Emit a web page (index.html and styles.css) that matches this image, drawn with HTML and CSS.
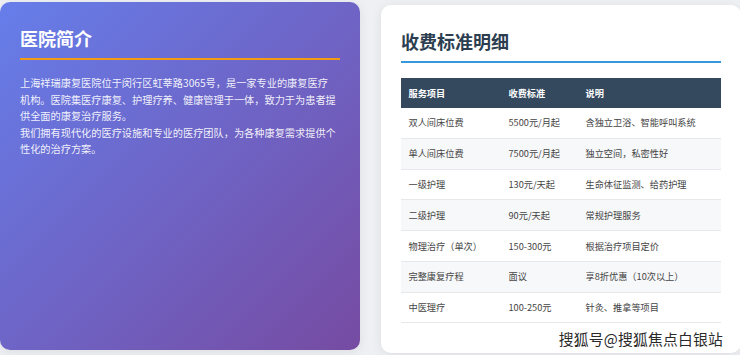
FILE: index.html
```html
<!DOCTYPE html>
<html lang="zh-CN">
<head>
    <meta charset="UTF-8">
    <meta name="viewport" content="width=device-width, initial-scale=1.0">
    <title>医院简介与收费标准</title>
    <link rel="stylesheet" href="styles.css">
</head>
<body>

    <div class="page">

        <div class="card card-intro">
            <h2 class="card-title">医院简介</h2>
            <p class="intro-text">上海祥瑞康复医院位于闵行区虹莘路3065号，是一家专业的康复医疗机构。医院集医疗康复、护理疗养、健康管理于一体，致力于为患者提供全面的康复治疗服务。<br>我们拥有现代化的医疗设施和专业的医疗团队，为各种康复需求提供个性化的治疗方案。</p>
        </div>

        <div class="card card-price">
            <h2 class="card-title">收费标准明细</h2>
            <table class="price-table">
                <colgroup>
                    <col class="col-name">
                    <col class="col-price">
                    <col>
                </colgroup>
                <thead>
                    <tr><th>服务项目</th><th>收费标准</th><th>说明</th></tr>
                </thead>
                <tbody>
                    <tr><td>双人间床位费</td><td>5500元/月起</td><td>含独立卫浴、智能呼叫系统</td></tr>
                    <tr><td>单人间床位费</td><td>7500元/月起</td><td>独立空间，私密性好</td></tr>
                    <tr><td>一级护理</td><td>130元/天起</td><td>生命体征监测、给药护理</td></tr>
                    <tr><td>二级护理</td><td>90元/天起</td><td>常规护理服务</td></tr>
                    <tr><td>物理治疗（单次）</td><td>150-300元</td><td>根据治疗项目定价</td></tr>
                    <tr><td>完整康复疗程</td><td>面议</td><td>享8折优惠（10次以上）</td></tr>
                    <tr><td>中医理疗</td><td>100-250元</td><td>针灸、推拿等项目</td></tr>
                </tbody>
            </table>
            <div class="watermark">搜狐号@搜狐焦点白银站</div>
        </div>

    </div>

</body>
</html>
```

FILE: styles.css
```css
body {
    margin: 0;
    height: 355px;
    overflow: hidden;
    background-color: #eef0f3;
    font-family: "Noto Sans CJK SC", "Noto Sans", sans-serif;
    color: #333;
}

.page {
    display: grid;
    grid-template-columns: 360px 360px;
    grid-template-rows: 348px;
    gap: 21px;
    padding-top: 5px;
}

.card {
    position: relative;
    box-sizing: border-box;
    padding: 25px 20px 20px;
    border-radius: 10px;
    background-color: #fff;
    box-shadow: 0 2px 12px rgba(0, 0, 0, 0.08);
}

/* левая карточка в состоянии hover - приподнята */
.card-intro {
    transform: translateY(-3px);
    background: linear-gradient(135deg, #667eea 0%, #764ba2 100%);
    color: #fff;
}

.card-title {
    margin: 0 0 15px;
    padding-bottom: 9px;
    font-size: 18px;
    line-height: 22px;
    font-weight: 700;
    border-bottom: 2px solid #3498db;
    color: #2c3e50;
}

.card-intro .card-title {
    color: #fff;
    border-bottom-color: #f39c12;
}

.intro-text {
    margin: 0;
    padding-right: 2px;
    font-size: 10.2px;
    line-height: 16.6px;
    color: rgba(255, 255, 255, 0.92);
}

.price-table {
    width: 100%;
    border-collapse: collapse;
    table-layout: fixed;
    font-size: 9.2px;
    line-height: 13px;
}

.col-name {
    width: 100px;
}

.col-price {
    width: 77px;
}

.price-table th {
    padding: 8.5px 7.5px;
    text-align: left;
    font-weight: 700;
    color: #fff;
    background-color: #34495e;
}

.price-table td {
    padding: 8.4px 7.5px;
    border-bottom: 1px solid #e6e8eb;
    color: #444;
    white-space: nowrap;
}

.price-table tbody tr:nth-child(even) {
    background-color: #f7f8fa;
}

.watermark {
    position: absolute;
    right: 18px;
    bottom: 3px;
    font-size: 14.8px;
    line-height: 22px;
    color: #2a2a2a;
    letter-spacing: 0.2px;
    text-shadow: 0 0 2px #fff, 0 0 2px #fff, 1px 1px 0 #fff;
}
```
